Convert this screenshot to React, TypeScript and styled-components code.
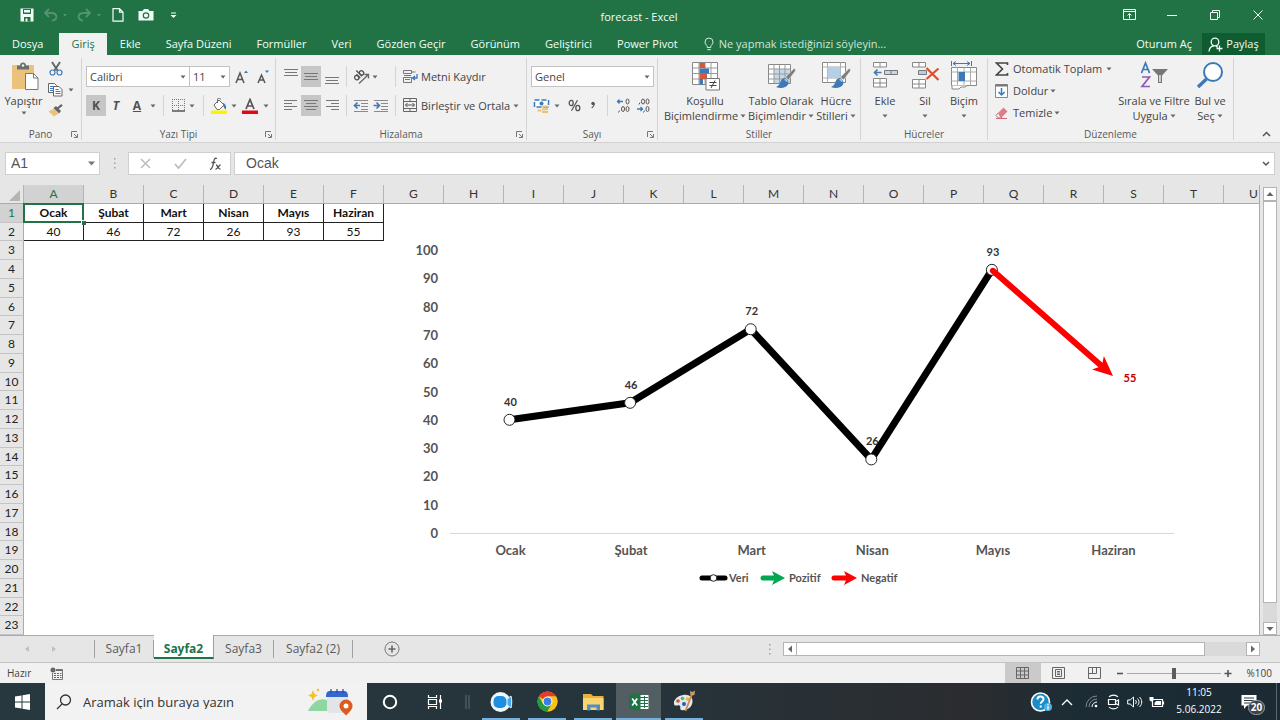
import React from "react";
import styled, { createGlobalStyle, css } from "styled-components";

const UI = `"Open Sans", "Noto Sans", sans-serif`;
const CELL = `Lato, "Noto Sans", sans-serif`;
const GREEN = "#217346";
const INK = "#444444";

const Global = createGlobalStyle`
  *, *::before, *::after { box-sizing: border-box; }
  body { margin: 0; background: #ffffff; }
  button, input, select {
    margin: 0; padding: 0; border: 0; background: none; color: inherit;
    font: inherit; border-radius: 0; outline: none;
  }
  button { display: flex; align-items: center; justify-content: center; white-space: nowrap; }
  select { appearance: none; }
  svg { display: block; flex: none; }
`;

const Window = styled.div`
  display: flex;
  flex-direction: column;
  min-height: 100vh;
  overflow: hidden;
  background: #e6e6e6;
  color: ${INK};
  font: 11px/14px ${UI};
`;

/* Title bar and ribbon tabs */
const Header = styled.header`
  background: ${GREEN};
  color: #f2fff7;
`;
const TitleBar = styled.div`
  display: grid;
  grid-template-columns: 1fr auto 1fr;
  align-items: center;
  height: 33px;
  padding: 0 14px 4px 12px;
`;
const QuickAccess = styled.div`
  display: flex;
  align-items: center;
  gap: 6px;
  padding-left: 7px;
`;
const WindowButtons = styled.div`
  display: flex;
  justify-content: flex-end;
  gap: 27px;
`;
const PlainButton = styled.button<{ $w?: number }>`
  width: ${(p) => p.$w ?? 16}px;
  height: 16px;
`;
const TitleText = styled.h1`
  margin: 0;
  padding-top: 4px;
  font: 11px/14px ${UI};
`;
const TabRow = styled.nav`
  display: flex;
  height: 22px;
`;
const RibbonTab = styled.button<{ $active?: boolean; $first?: boolean }>`
  padding: 0 12px 0 13px;
  ${(p) => p.$first && css`
    padding: 0 16px 0 12px;
  `}
  ${(p) => p.$active && css`
    padding: 0 12px;
    background: #f1f1f1;
    color: ${GREEN};
  `}
`;
const TellMe = styled.button`
  gap: 5px;
  margin-left: 14px;
  color: #cfe5d8;
`;
const Spacer = styled.div`
  flex: 1;
`;
const SignIn = styled.button`
  padding: 0 10px;
`;
const Share = styled.button`
  gap: 3px;
  width: 63px;
  margin-right: 15px;
  background: #0e5c2f;
`;

/* Ribbon */
const Ribbon = styled.section`
  display: flex;
  height: 88px;
  padding-top: 3px;
  background: #f1f1f1;
  border-bottom: 1px solid #d2d2d2;
`;
const GroupBox = styled.div<{ $w: number }>`
  display: flex;
  flex: none;
  flex-direction: column;
  width: ${(p) => p.$w}px;
  height: 82px;
  border-right: 1px solid #d4d4d4;
`;
const GroupBody = styled.div<{ $pad?: string }>`
  display: flex;
  flex: 1;
  min-height: 0;
  padding: ${(p) => p.$pad ?? "0 3px"};
`;
const GroupFoot = styled.div`
  display: grid;
  grid-template-columns: 11px 1fr 11px;
  height: 13px;
  align-items: center;
  color: #5a5a5a;
  font-size: 10px;
  text-align: center;
  & > :nth-child(2) { white-space: nowrap; }
`;
const LaunchButton = styled.button`
  width: 9px;
  height: 9px;
`;
const Rows = styled.div`
  display: flex;
  flex-direction: column;
  gap: 8px;
  padding-top: 8px;
`;
const ToolRow = styled.div`
  display: flex;
  height: 21px;
  align-items: stretch;
`;
const Tool = styled.button<{ $w: number; $on?: boolean }>`
  flex: none;
  width: ${(p) => p.$w}px;
  background: ${(p) => (p.$on ? "#c6c6c6" : "transparent")};
  & > b { color: #505050; font-size: 12px; }
`;
const Divider = styled.span<{ $w: number }>`
  display: flex;
  flex: none;
  justify-content: center;
  width: ${(p) => p.$w}px;
  &::before { content: ""; width: 1px; background: #d4d4d4; }
`;
const Gap = styled.span<{ $w: number }>`
  flex: none;
  width: ${(p) => p.$w}px;
`;
const TextTool = styled.button`
  gap: 3px;
  padding-left: 4px;
`;
const SelectWrap = styled.label<{ $w: number }>`
  position: relative;
  display: flex;
  width: ${(p) => p.$w}px;
  height: 21px;
  border: 1px solid #c3c3c3;
  background: #ffffff;
  & + & { border-left: 0; }
  & > select { flex: 1; min-width: 0; padding-left: 3px; }
  & > svg { position: absolute; right: 3px; top: 8px; pointer-events: none; }
`;
const PasteButton = styled.button`
  flex-direction: column;
  justify-content: flex-start;
  width: 47px;
  gap: 3px;
  padding-top: 4px;
`;
const MiniColumn = styled.div`
  display: flex;
  flex-direction: column;
  & > div { height: 21px; }
`;
const BigButton = styled.button<{ $w: number }>`
  flex: none;
  flex-direction: column;
  justify-content: flex-start;
  width: ${(p) => p.$w}px;
  padding-top: 3px;
  line-height: 15px;
  & > svg:first-child { margin-bottom: 2px; }
`;
const WithCaret = styled.span`
  display: flex;
  align-items: center;
  gap: 2px;
  min-height: 15px;
`;
const EditColumn = styled.div`
  display: flex;
  flex-direction: column;
  width: 127px;
  padding-left: 3px;
  & > button { justify-content: flex-start; height: 22px; gap: 4px; }
`;
const Collapse = styled.div`
  display: flex;
  flex: 1;
  align-items: flex-end;
  justify-content: flex-end;
  padding: 0 6px 0 0;
`;

/* Formula bar */
const FormulaBar = styled.div`
  display: flex;
  height: 42px;
  padding: 9px 5px 10px;
  color: #555555;
  font: 14px/21px "Liberation Sans", sans-serif;
`;
const WhiteBox = styled.div<{ $w?: number }>`
  display: flex;
  align-items: center;
  justify-content: space-between;
  flex: ${(p) => (p.$w ? "none" : "1")};
  width: ${(p) => (p.$w ? p.$w + "px" : "auto")};
  padding: 0 4px 0 5px;
  border: 1px solid #cfcfcf;
  background: #ffffff;
  & > input { flex: 1; min-width: 0; }
`;
const NameInput = styled.input``;
const FormulaInput = styled.input`
  padding-left: 6px;
`;
const DotsBox = styled.span<{ $w: number }>`
  display: flex;
  flex: none;
  align-items: center;
  justify-content: center;
  width: ${(p) => p.$w}px;
`;

/* Sheet */
const SheetArea = styled.main`
  display: flex;
  flex: 1 0 auto;
  height: 451px;
  border-bottom: 1px solid #ababab;
`;
const SheetView = styled.div`
  position: relative;
  flex: 1;
  min-width: 0;
  height: 450px;
  overflow: hidden;
  background: #ffffff;
  border-right: 1px solid #ababab;
`;
const Grid = styled.table`
  width: 1284px;
  table-layout: fixed;
  border-collapse: separate;
  border-spacing: 0;
  font: 12px/16px ${CELL};
  color: #222222;
  text-align: center;
  th, td { padding: 0; }
`;
const ColHead = styled.th<{ $on?: boolean }>`
  height: 19px;
  font-weight: 400;
  background: ${(p) => (p.$on ? "#d2d2d2" : "#e6e6e6")};
  color: ${(p) => (p.$on ? GREEN : "#333333")};
  border-right: 1px solid #b5b5b5;
  border-bottom: 1px solid ${(p) => (p.$on ? GREEN : "#ababab")};
`;
const Corner = styled(ColHead)`
  & > svg { margin: 2px 3px 0 auto; }
`;
const RowHead = styled.th<{ $on?: boolean }>`
  font-weight: 400;
  background: ${(p) => (p.$on ? "#d2d2d2" : "#e6e6e6")};
  color: ${(p) => (p.$on ? GREEN : "#222222")};
  border-right: 1px solid ${(p) => (p.$on ? GREEN : "#ababab")};
  border-bottom: 1px solid #c4c4c4;
`;
const Row = styled.tr<{ $short: boolean }>`
  height: ${(p) => (p.$short ? 18 : 19)}px;
`;
const Cell = styled.td<{ $bold?: boolean; $selected?: boolean }>`
  position: relative;
  color: #111111;
  font-weight: ${(p) => (p.$bold ? 700 : 400)};
  border-right: 1px solid #222222;
  border-bottom: 1px solid #222222;
  ${(p) => p.$selected && css`
    &::before {
      content: "";
      position: absolute;
      inset: -1px;
      border: 2px solid ${GREEN};
    }
    &::after {
      content: "";
      position: absolute;
      right: -3px;
      bottom: -3px;
      z-index: 1;
      width: 5px;
      height: 5px;
      background: ${GREEN};
      border: 1px solid #ffffff;
      border-width: 1px 0 0 1px;
    }
  `}
`;
const ChartFrame = styled.figure`
  position: absolute;
  left: 400px;
  top: 45px;
  margin: 0;
`;
const VScroll = styled.div`
  display: flex;
  flex-direction: column;
  width: 20px;
  padding: 2px 3px 0;
`;
const ScrollButton = styled.button<{ $h: number }>`
  flex: none;
  width: 14px;
  height: ${(p) => p.$h}px;
  border: 1px solid #b4b4b4;
  background: #ffffff;
`;
const VThumb = styled.div`
  flex: 1;
  background: #ffffff;
  border: 1px solid #b4b4b4;
`;
const VTrack = styled.div`
  height: 19px;
  background: #dadada;
`;

/* Sheet tabs */
const SheetTabs = styled.div`
  display: flex;
  height: 27px;
  padding-right: 20px;
  border-bottom: 1px solid #c3c3c3;
  font: 12px/16px ${UI};
`;
const SheetNav = styled.div`
  display: flex;
  align-items: center;
  gap: 21px;
  width: 95px;
  height: 18px;
  margin-top: 4px;
  padding-left: 24px;
  border-right: 1px solid #a0a0a0;
`;
const SheetTab = styled.button<{ $w: number; $active?: boolean; $bar?: boolean }>`
  width: ${(p) => p.$w}px;
  height: 18px;
  margin-top: 4px;
  color: #5a5a5a;
  border-right: ${(p) => (p.$bar ? "1px solid #a0a0a0" : "0")};
  ${(p) => p.$active && css`
    height: 24px;
    margin-top: -1px;
    padding-top: 5px;
    background: #ffffff;
    color: ${GREEN};
    font-weight: 700;
    border-right: 1px solid #a0a0a0;
    border-bottom: 2px solid ${GREEN};
  `}
`;
const AddSheet = styled.button`
  width: 77px;
`;
const HScroll = styled.div`
  display: flex;
  align-self: center;
  width: 477px;
  height: 14px;
  background: #dadada;
`;
const HThumb = styled.div`
  width: 408px;
  background: #ffffff;
  border: 1px solid #b4b4b4;
  border-left: 0;
`;

/* Status bar */
const StatusBar = styled.footer`
  display: flex;
  align-items: center;
  height: 20px;
  padding: 0 8px 0 7px;
  background: #f1f1f1;
  font-size: 10px;
`;
const ViewButton = styled.button<{ $on?: boolean }>`
  width: 36px;
  height: 20px;
  background: ${(p) => (p.$on ? "#cacaca" : "transparent")};
`;
const ZoomRange = styled.input`
  appearance: none;
  width: 94px;
  height: 12px;
  margin: 0 3px;
  background: linear-gradient(#a8a8a8, #a8a8a8) center / 100% 1px no-repeat;
  &::-webkit-slider-thumb { appearance: none; width: 4px; height: 11px; background: #5c5c5c; }
`;
const StatusIcon = styled.span`
  margin-left: 19px;
`;
const ZoomValue = styled.span`
  margin-left: 15px;
`;

/* Taskbar */
const Taskbar = styled.div`
  display: flex;
  align-items: stretch;
  height: 37px;
  background: linear-gradient(90deg, #27383f, #26343b 50%, #2b2c2f 76%, #1c2c35 84%, #1b2a33);
  color: #ffffff;
`;
const StartButton = styled.button`
  width: 45px;
`;
const SearchBox = styled.label`
  display: flex;
  align-items: center;
  width: 322px;
  padding: 0 14px 0 11px;
  background: #f2f2f2;
  color: #333333;
  font-size: 13px;
  & > input { flex: 1; min-width: 0; margin-left: 11px; }
  & > input::placeholder { color: #333333; opacity: 1; }
`;
const TaskButton = styled.button<{ $open?: boolean; $active?: boolean; $w?: number }>`
  position: relative;
  width: ${(p) => p.$w ?? 46}px;
  background: ${(p) => (p.$active ? "#525e62" : "transparent")};
  ${(p) => p.$open && css`
    &::after {
      content: "";
      position: absolute;
      left: ${p.$active ? 0 : 4}px;
      right: ${p.$active ? 0 : 4}px;
      bottom: 0;
      height: 2px;
      background: #76b0de;
    }
  `}
`;
const TraySlot = styled.button`
  width: 22px;
`;
const Clock = styled.time`
  width: 62px;
  padding-top: 1px;
  font: 10px/17px ${UI};
  text-align: center;
`;
const Notices = styled.button`
  position: relative;
  width: 42px;
  margin-right: 4px;
  padding-right: 5px;
`;
const NoticeBadge = styled.span`
  position: absolute;
  left: 18px;
  top: 17px;
  width: 17px;
  height: 15px;
  border: 1px solid #9aa2a6;
  border-radius: 8px;
  background: #3a444a;
  font: 700 10px/13px ${UI};
`;
const DesktopEdge = styled.span`
  width: 4px;
  border-left: 1px solid #5b666b;
`;

/* Icons */
type IconProps = { w: number; h: number; children: React.ReactNode };
const Icon = ({ w, h, children }: IconProps) => (
  <svg width={w} height={h} viewBox={`0 0 ${w} ${h}`} fill="none" aria-hidden="true">
    {children}
  </svg>
);
const Caret = () => (
  <Icon w={6} h={4}><path d="M0.5 0.5h5L3 3.5z" fill="#666666" /></Icon>
);
const Arrow = ({ d }: { d: string }) => (
  <Icon w={8} h={8}><path d={d} fill="#666666" /></Icon>
);
const Dots = () => (
  <Icon w={3} h={13}>
    <path d="M1 1h1.5v1.5H1zM1 5.5h1.5V7H1zM1 10h1.5v1.5H1z" fill="#a0a0a0" />
  </Icon>
);
const Lines = ({ spec }: { spec: [number, number, number][] }) => (
  <Icon w={14} h={16}>
    {spec.map(([x, y, len]) => (
      <path key={y} d={`M${x} ${y + 0.5}h${len}`} stroke="#777777" />
    ))}
  </Icon>
);
const Launcher = () => (
  <Icon w={9} h={9}>
    <path d="M1.500 7V1.500H7M4 4l3 3M7.500 4v3.500H4" stroke="#777777" />
  </Icon>
);
const Indent = ({ right }: { right?: boolean }) => (
  <Icon w={16} h={14}>
    <path d="M1 1.500h14M8 4.500h7M8 7.500h7M8 10.500h7M1 12.500h14" stroke="#8a8a8a" />
    <path
      d={right ? "M0.500 6.500h5M3.500 3.500l3 3-3 3" : "M7 6.500H2M4.500 3.500l-3 3 3 3"}
      stroke="#3e78b5"
      strokeWidth="1.600"
    />
  </Icon>
);
const Brush = ({ x }: { x: number }) => (
  <g transform={`translate(${x} 0)`}>
    <path d="M20 7.500 11.500 16l3 3 6.500-8.500c.7-1 .6-3.500-1-3z" fill="#7c7c7c" stroke="#f1f1f1" strokeWidth="0.600" />
    <path d="M11 17c-3 0-4 2.500-5 5-.8 1.900-2 3.300-4 4 4.500 1.800 10.500.8 12-2.500.8-1.700.3-3.500-.4-4.500z" fill="#3e78b5" />
    <path d="M10.500 18.500c1.300 0 2.300 1 2.400 2.300" stroke="#a9cdea" strokeWidth="1.400" />
  </g>
);

const PasteIcon = () => (
  <Icon w={30} h={29}>
    <g transform="translate(3 0)">
      <rect x="0" y="3" width="22" height="24" rx="1" fill="#ebc27c" />
      <path d="M5 3.500h3C8 1.500 9.300.500 11 .500s3 1 3 3h3V7.500H5z" fill="#6e6e6e" />
      <circle cx="11" cy="3.500" r="1.200" fill="#f1f1f1" />
      <path d="M13.500 11.500h8l4.500 4.500v11.500H13.500z" fill="#ffffff" stroke="#777777" />
      <path d="M21.500 11.500V16H26" stroke="#777777" />
    </g>
  </Icon>
);
const CutIcon = () => (
  <Icon w={14} h={15}>
    <path d="M3 1l5.500 8.500M11 1L5.500 9.500" stroke="#666666" strokeWidth="2" />
    <circle cx="3.500" cy="11.500" r="2.500" stroke="#3e78b5" strokeWidth="1.200" />
    <circle cx="10.500" cy="11.500" r="2.500" stroke="#3e78b5" strokeWidth="1.200" />
  </Icon>
);
const CopyIcon = () => (
  <Icon w={15} h={14}>
    <path d="M1 .5h5.500L8.500 2.500V9.500H.5V.5z" fill="#fff" stroke="#666" />
    <path d="M2 3.500h4M2 5.500h4M2 7.500h3" stroke="#3e78b5" />
    <path d="M5.500 3.500H11l3 3v6.500H5.500z" fill="#fff" stroke="#666" />
    <path d="M7.500 6.500h3M7.500 8.500h5M7.500 10.500h5" stroke="#3e78b5" />
  </Icon>
);
const PainterIcon = () => (
  <Icon w={15} h={13}>
    <path d="M0.500 7.500 6 4.500l4.500 5L6 12.500z" fill="#ebc27c" />
    <path d="M5.500 4l2.500-2 5 5-2 2.500z" fill="#666" />
    <path d="M9.500 4.500 14 .8" stroke="#666" strokeWidth="2.200" />
  </Icon>
);

const CondIcon = () => (
  <Icon w={30} h={30}>
    <path d="M2.500 1.500h25v22h-25z" fill="#fff" stroke="#888" />
    <path d="M2.500 7h25M2.500 12.500h25M2.500 18h25M9 1.500v22M15 1.500v22M21 1.500v22" stroke="#999" />
    <path d="M9.500 2H15v5H9.500zM9.500 12.500H17V18H9.500z" fill="#d05a3c" />
    <path d="M9.500 7.500H19v5H9.500zM9.500 18H13v5.500H9.500z" fill="#3e78b5" />
    <path d="M16 17.500h13.500v11.500H16z" fill="#fff" stroke="#777" />
    <path d="M19.500 21.500h7M19.500 24.500h7M25 19.500l-4 7.500" stroke="#444" />
  </Icon>
);
const TableIcon = () => (
  <Icon w={30} h={30}>
    <path d="M2.500 3.500h22v19h-22z" fill="#fff" stroke="#888" />
    <path d="M8 8h16v14H8z" fill="#c3d9ea" />
    <path d="M2.500 8h22M2.500 13h22M2.500 18h22M8 3.500v19M13.500 3.500v19M19 3.500v19" stroke="#999" />
    <Brush x={8} />
  </Icon>
);
const StyleIcon = () => (
  <Icon w={30} h={30}>
    <path d="M1.500 1.500h23v20h-23z" fill="#fff" stroke="#888" />
    <path d="M1.500 6h23M1.500 17h23M6.500 1.500v20M19.500 1.500v20" stroke="#aaa" />
    <path d="M6.500 6h13v11h-13z" fill="#b5cfe6" />
    <Brush x={8} />
  </Icon>
);
const InsertIcon = () => (
  <Icon w={28} h={30}>
    <path d="M2.500 1.500h13v4.500h-13zM9 1.500v4.500M2.500 17.500h13v8.500h-13zM9 17.500v8.500M2.500 22h13" fill="#fff" stroke="#888" />
    <path d="M13.500 9.500h13v4h-13zM20 9.500v4" fill="#c3d9ea" stroke="#777" />
    <path d="M3.500 11.500h7M6.500 8.500l-3 3 3 3" stroke="#3e78b5" strokeWidth="1.600" />
  </Icon>
);
const DeleteIcon = () => (
  <Icon w={30} h={30}>
    <path d="M2.500 1.500h13v4.500h-13zM9 1.500v4.500M2.500 18.500h13v8.500h-13zM9 18.500v8.500M2.500 23h13" fill="#fff" stroke="#888" />
    <path d="M8.500 9.500h8v4h-8z" fill="#b5cfe6" stroke="#777" />
    <path d="M16.500 7l12 12M28.500 7.500L16.500 18" stroke="#d9512c" strokeWidth="2.200" />
  </Icon>
);
const FormatIcon = () => (
  <Icon w={28} h={30}>
    <path d="M1.500 0v5M21.500 0v5M3 2.500h17M6 .5l-3 2 3 2M17 .5l3 2-3 2" stroke="#3e78b5" />
    <path d="M1.500 6.500h25v18h-25z" fill="#fff" stroke="#888" />
    <path d="M1.500 11h25M1.500 20h25M7.500 6.500v18M14 6.500v18M20.500 6.500v18" stroke="#aaa" />
    <path d="M8.500 11h6.500v9H8.500z" fill="#3e78b5" />
    <path d="M2 24.500v3.500h7l2-2h4l2-1.500" fill="#fff" stroke="#888" />
  </Icon>
);

const ChromeIcon = () => (
  <Icon w={21} h={21}>
    <circle cx="10.500" cy="10.500" r="10" fill="#fbc116" />
    <path d="M10.500 10.500 1.840 5.500A10 10 0 0 1 19.160 5.500H10.500z" fill="#e33b2e" />
    <path d="M10.500 10.500 6.200 13 1.840 5.500A10 10 0 0 0 10.500 20.500L14.800 13z" fill="#249a41" />
    <path d="M10.500 5.500h8.660A10 10 0 0 1 10.500 20.500L14.800 13z" fill="#fbc116" />
    <circle cx="10.500" cy="10.500" r="5" fill="#fff" />
    <circle cx="10.500" cy="10.500" r="3.900" fill="#3b7de9" />
  </Icon>
);

/* Chart */
const months = ["Ocak", "Şubat", "Mart", "Nisan", "Mayıs", "Haziran"];
const values = [40, 46, 72, 26, 93, 55];
const ticks = [100, 90, 80, 70, 60, 50, 40, 30, 20, 10, 0];
const px = (i: number) => 109.5 + i * 120.6;
const py = (v: number) => 303 - v * 2.83;

const Chart = () => {
  const line = values.slice(0, 5).map((v, i) => `${px(i)},${py(v)}`).join(" ");
  const [x1, y1, x2, y2] = [px(4) + 1, py(93) + 1, 713, 146];
  const angle = (Math.atan2(y2 - y1, x2 - x1) * 180) / Math.PI;
  const length = Math.hypot(x2 - x1, y2 - y1);
  return (
    <svg width="800" height="380" viewBox="0 0 800 380" fontFamily={CELL} fontWeight="700" role="img" aria-label="Aylık veri">
      <g fontSize="13" fill="#555555" textAnchor="end">
        {ticks.map((t) => <text key={t} x="38" y={py(t) + 5}>{t}</text>)}
      </g>
      <path d="M50 303.500h724" stroke="#d9d9d9" />
      <g fontSize="13" fill="#555555" textAnchor="middle">
        {months.map((m, i) => <text key={m} x={px(i) + 1} y="325">{m}</text>)}
      </g>
      <polyline points={line} fill="none" stroke="#000000" strokeWidth="7" strokeLinejoin="round" />
      {values.slice(0, 5).map((v, i) => (
        <g key={i}>
          <circle cx={px(i)} cy={py(v)} r="5.500" fill="#ffffff" stroke="#222222" />
          <text x={px(i) + 1} y={py(v) - 14} fontSize="11" fill="#333333" textAnchor="middle">{v}</text>
        </g>
      ))}
      <g transform={`translate(${x1} ${y1}) rotate(${angle})`}>
        <path d={`M0 0H${length - 14}`} stroke="#ff0000" strokeWidth="6" strokeLinecap="round" />
        <path d={`M${length} 0l-20 -9 5 9 -5 9z`} fill="#ff0000" />
      </g>
      <text x="730" y="152" fontSize="11" fill="#c00000" textAnchor="middle">55</text>
      <g fontSize="11" fill="#555555">
        <path d="M302 348h23" stroke="#000" strokeWidth="5" strokeLinecap="round" />
        <circle cx="313.500" cy="348" r="3.300" fill="#fff" stroke="#222" />
        <text x="329" y="352">Veri</text>
        <path d="M363 348h12" stroke="#00a651" strokeWidth="5" strokeLinecap="round" />
        <path d="M385 348l-13 -7 3 7 -3 7z" fill="#00a651" />
        <text x="389" y="352">Pozitif</text>
        <path d="M434 348h12" stroke="#ff0000" strokeWidth="5" strokeLinecap="round" />
        <path d="M457 348l-13 -7 3 7 -3 7z" fill="#ff0000" />
        <text x="461" y="352">Negatif</text>
      </g>
    </svg>
  );
};

const Group = ({ w, name, launch, pad, children }: {
  w: number; name: string; launch?: boolean; pad?: string; children: React.ReactNode;
}) => (
  <GroupBox $w={w}>
    <GroupBody $pad={pad}>{children}</GroupBody>
    <GroupFoot>
      <span />
      <span>{name}</span>
      {launch ? <LaunchButton aria-label={`${name} ayarları`}><Launcher /></LaunchButton> : <span />}
    </GroupFoot>
  </GroupBox>
);

const columns = "ABCDEFGHIJKLMNOPQRSTU".split("");
const otherTabs = ["Ekle", "Sayfa Düzeni", "Formüller", "Veri", "Gözden Geçir", "Görünüm", "Geliştirici", "Power Pivot"];

export default function App() {
  return (
    <Window>
      <Global />
      <Header>
        <TitleBar>
          <QuickAccess>
            <PlainButton aria-label="Kaydet">
              <Icon w={14} h={14}>
                <path d="M.5.500h13v13H.5z" fill="#f2fff7" />
                <path d="M3 1h8v5H3zM4 9h6.500v4.500H4z" fill={GREEN} />
                <path d="M5.500 10.500h2v3h-2zM4 2h6v2.500H4z" fill="#f2fff7" />
              </Icon>
            </PlainButton>
            <PlainButton $w={28} aria-label="Geri al">
              <Icon w={25} h={14}>
                <path d="M6 1L2 5l4 4M2 5h6c7 0 7 7 1 7.500" stroke="#559473" strokeWidth="1.800" />
                <path d="M20 6h4l-2 2.500z" fill="#559473" />
              </Icon>
            </PlainButton>
            <PlainButton $w={28} aria-label="Yinele">
              <Icon w={25} h={14}>
                <path d="M9 1l4 4-4 4M13 5H7c-7 0-7 7-1 7.500" stroke="#559473" strokeWidth="1.800" />
                <path d="M20 6h4l-2 2.500z" fill="#559473" />
              </Icon>
            </PlainButton>
            <PlainButton $w={18} aria-label="Yeni">
              <Icon w={12} h={14}>
                <path d="M1 .700h6.500L11 4.200v9H1zM7.500.700v3.500H11" stroke="#f2fff7" strokeWidth="1.200" />
              </Icon>
            </PlainButton>
            <PlainButton $w={26} aria-label="Kamera">
              <Icon w={16} h={13}>
                <path d="M.5 3h4L6 1h4l1.500 2h4v9.500H.5z" fill="#f2fff7" />
                <circle cx="8" cy="7.500" r="2.700" stroke={GREEN} strokeWidth="1.200" />
              </Icon>
            </PlainButton>
            <PlainButton aria-label="Hızlı erişim">
              <Icon w={7} h={8}><path d="M1 2h5" stroke="#f2fff7" /><path d="M.5 4h6L3.500 7z" fill="#f2fff7" /></Icon>
            </PlainButton>
          </QuickAccess>
          <TitleText>forecast - Excel</TitleText>
          <WindowButtons>
            <PlainButton aria-label="Şerit seçenekleri">
              <Icon w={13} h={11}><path d="M.5.500h12v10H.5zM.5 2.500h12M6.500 9.500V5M4.500 6.500l2-2 2 2" stroke="#f2fff7" /></Icon>
            </PlainButton>
            <PlainButton aria-label="Simge durumuna küçült">
              <Icon w={10} h={10}><path d="M0 5.500h10" stroke="#f2fff7" /></Icon>
            </PlainButton>
            <PlainButton aria-label="Önceki boyut">
              <Icon w={10} h={10}><path d="M.5 2.500h7v7h-7zM2.500 2.500v-2h7v7h-2" stroke="#f2fff7" /></Icon>
            </PlainButton>
            <PlainButton aria-label="Kapat">
              <Icon w={10} h={10}><path d="M.5.500l9 9M9.500.500l-9 9" stroke="#f2fff7" /></Icon>
            </PlainButton>
          </WindowButtons>
        </TitleBar>
        <TabRow>
          <RibbonTab $first>Dosya</RibbonTab>
          <RibbonTab $active>Giriş</RibbonTab>
          {otherTabs.map((t) => <RibbonTab key={t}>{t}</RibbonTab>)}
          <TellMe>
            <Icon w={10} h={14}>
              <path d="M3.200 10.500V8.800C1.800 7.800 1 6.600 1 5a4 4 0 0 1 8 0c0 1.600-.8 2.800-2.200 3.800v1.700zM3.200 12.700h3.600" stroke="#cfe5d8" />
            </Icon>
            Ne yapmak istediğinizi söyleyin...
          </TellMe>
          <Spacer />
          <SignIn>Oturum Aç</SignIn>
          <Share>
            <Icon w={15} h={15}>
              <circle cx="7" cy="5" r="3.800" stroke="#f2fff7" strokeWidth="1.300" />
              <path d="M1 14.500c.3-3.500 2.500-5.500 5-5.700M8 8.500l1.500 2M11.500 8.500v6M8.500 11.500h6" stroke="#f2fff7" strokeWidth="1.300" />
            </Icon>
            Paylaş
          </Share>
        </TabRow>
      </Header>

      <Ribbon>
        <Group w={82} name="Pano" launch pad="0">
          <PasteButton>
            <PasteIcon />
            Yapıştır
            <Caret />
          </PasteButton>
          <MiniColumn>
            <ToolRow><Tool $w={17} aria-label="Kes"><CutIcon /></Tool></ToolRow>
            <ToolRow>
              <Tool $w={17} aria-label="Kopyala"><CopyIcon /></Tool>
              <Tool $w={13} aria-label="Kopyalama seçenekleri"><Caret /></Tool>
            </ToolRow>
            <ToolRow><Tool $w={17} aria-label="Biçim boyacısı"><PainterIcon /></Tool></ToolRow>
          </MiniColumn>
        </Group>

        <Group w={194} name="Yazı Tipi" launch pad="0 0 0 4px">
          <Rows>
            <ToolRow>
              <SelectWrap $w={104}>
                <select aria-label="Yazı tipi"><option>Calibri</option></select>
                <Caret />
              </SelectWrap>
              <SelectWrap $w={40}>
                <select aria-label="Boyut"><option>11</option></select>
                <Caret />
              </SelectWrap>
              <Tool $w={23} aria-label="Büyüt">
                <Icon w={14} h={16}>
                  <path d="M1 14L5 4l4 10M2.500 10.500h5" stroke="#555" strokeWidth="1.500" />
                  <path d="M9 4l2-2.500L13 4z" fill="#3e78b5" />
                </Icon>
              </Tool>
              <Tool $w={20} aria-label="Küçült">
                <Icon w={14} h={16}>
                  <path d="M2 14l3.500-8L9 14M3.500 11h4" stroke="#555" strokeWidth="1.500" />
                  <path d="M9 1.500h4L11 4z" fill="#3e78b5" />
                </Icon>
              </Tool>
            </ToolRow>
            <ToolRow>
              <Tool $w={20} $on aria-label="Kalın"><b>K</b></Tool>
              <Tool $w={20} aria-label="İtalik"><b><i>T</i></b></Tool>
              <Tool $w={22} aria-label="Altı çizili"><b><u>A</u></b></Tool>
              <Tool $w={10} aria-label="Alt çizgi seçenekleri"><Caret /></Tool>
              <Divider $w={11} />
              <Tool $w={18} aria-label="Kenarlıklar">
                <Icon w={13} h={13}>
                  <path d="M.5 0v12M6.500 0v12M12.500 0v12M0 .5h13M0 6.500h13" stroke="#777" strokeDasharray="1 1" />
                  <path d="M0 12h13" stroke="#555" strokeWidth="1.500" />
                </Icon>
              </Tool>
              <Tool $w={10} aria-label="Kenarlık seçenekleri"><Caret /></Tool>
              <Divider $w={12} />
              <Tool $w={20} aria-label="Dolgu rengi">
                <Icon w={16} h={16}>
                  <path d="M3 7l5-5 5 5-4.500 4.500H6z" fill="#fff" stroke="#666" />
                  <path d="M6.500 5V1.500a1.500 1.500 0 0 1 3 0" stroke="#666" />
                  <path d="M12 5c2 .5 3.500 2.500 3 6.500-2-.5-2-3-3-4z" fill="#3e78b5" />
                  <path d="M0 12.500h16V16H0z" fill="#fdf300" />
                </Icon>
              </Tool>
              <Tool $w={10} aria-label="Dolgu seçenekleri"><Caret /></Tool>
              <Tool $w={22} aria-label="Yazı tipi rengi">
                <Icon w={16} h={16}>
                  <path d="M4 11L8 1.500l4 9.500M5.500 8h5" stroke="#555" strokeWidth="1.700" />
                  <path d="M0 12.500h16V16H0z" fill="#e30613" />
                </Icon>
              </Tool>
              <Tool $w={10} aria-label="Renk seçenekleri"><Caret /></Tool>
            </ToolRow>
          </Rows>
        </Group>

        <Group w={251} name="Hizalama" launch pad="0 0 0 4px">
          <Rows>
            <ToolRow>
              <Tool $w={21} aria-label="Üste hizala"><Lines spec={[[0, 0, 14], [1, 3, 12], [0, 6, 14]]} /></Tool>
              <Tool $w={20} $on aria-label="Ortaya hizala"><Lines spec={[[0, 4, 14], [1, 7, 12], [0, 10, 14]]} /></Tool>
              <Tool $w={21} aria-label="Alta hizala"><Lines spec={[[0, 8, 14], [1, 11, 12], [0, 14, 14]]} /></Tool>
              <Divider $w={9} />
              <Tool $w={20} aria-label="Yönlendirme">
                <Icon w={17} h={16}>
                  <path d="M6 14.500L15 6M11.500 5.500h4v4" stroke="#666" strokeWidth="1.300" />
                  <g transform="rotate(-45 8 8)" stroke="#505050" strokeWidth="1.300">
                    <ellipse cx="4.500" cy="5.500" rx="2" ry="2.300" />
                    <path d="M6.800 2.800v5.400M9.300 0v8.200" />
                    <ellipse cx="11.300" cy="5.500" rx="2" ry="2.300" />
                  </g>
                </Icon>
              </Tool>
              <Tool $w={8} aria-label="Yön seçenekleri"><Caret /></Tool>
              <Gap $w={12} />
              <Divider $w={8} />
              <TextTool>
                <Icon w={15} h={15}>
                  <path d="M.5 1.500h8v3h-8zM8.500 3h4M1 6.500h7M.5 8.500h8v5h-8zM2 10.500h5" stroke="#777" />
                  <path d="M14 5v4H10M12 7l-2.500 2L12 11" stroke="#3e78b5" strokeWidth="1.300" />
                </Icon>
                Metni Kaydır
              </TextTool>
            </ToolRow>
            <ToolRow>
              <Tool $w={21} aria-label="Sola hizala"><Lines spec={[[0, 2, 13], [0, 5, 8], [0, 8, 13], [0, 11, 8]]} /></Tool>
              <Tool $w={20} $on aria-label="Ortala"><Lines spec={[[0, 2, 14], [2, 5, 10], [0, 8, 14], [2, 11, 10]]} /></Tool>
              <Tool $w={21} aria-label="Sağa hizala"><Lines spec={[[1, 2, 13], [6, 5, 8], [1, 8, 13], [6, 11, 8]]} /></Tool>
              <Divider $w={9} />
              <Tool $w={20} aria-label="Girintiyi azalt"><Indent /></Tool>
              <Tool $w={20} aria-label="Girintiyi artır"><Indent right /></Tool>
              <Divider $w={8} />
              <TextTool>
                <Icon w={15} h={15}>
                  <path d="M.5.500h13v13H.5zM.5 3.500h13M.5 10.500h13M7 .5v3M7 10.500v3" stroke="#666" />
                  <path d="M2.500 7h9M4.500 5l-2 2 2 2M9.500 5l2 2-2 2" stroke="#555" />
                </Icon>
                Birleştir ve Ortala
              </TextTool>
              <Tool $w={12} aria-label="Birleştirme seçenekleri"><Caret /></Tool>
            </ToolRow>
          </Rows>
        </Group>

        <Group w={131} name="Sayı" launch pad="0 0 0 4px">
          <Rows>
            <ToolRow>
              <SelectWrap $w={123}>
                <select aria-label="Sayı biçimi"><option>Genel</option></select>
                <Caret />
              </SelectWrap>
            </ToolRow>
            <ToolRow>
              <Tool $w={20} aria-label="Para birimi">
                <Icon w={17} h={16}>
                  <path d="M1.500 2h14v7h-14z" fill="#fff" stroke="#3e78b5" strokeWidth="1.500" strokeDasharray="5 2" />
                  <circle cx="8.500" cy="5.500" r="2" fill="#3e78b5" />
                  <path d="M9 7.500h6v2H9zM9 10.200h6v2H9zM9 13h6v2H9zM4.500 11.500h4v2h-4z" fill="#ebc27c" />
                </Icon>
              </Tool>
              <Tool $w={12} aria-label="Para seçenekleri"><Caret /></Tool>
              <Tool $w={22} aria-label="Yüzde">
                <Icon w={13} h={13}>
                  <ellipse cx="3.200" cy="4" rx="2" ry="2.700" stroke="#555" strokeWidth="1.300" />
                  <ellipse cx="9.800" cy="9" rx="2" ry="2.700" stroke="#555" strokeWidth="1.300" />
                  <path d="M9.500 1.300L3.500 11.700" stroke="#555" strokeWidth="1.200" />
                </Icon>
              </Tool>
              <Tool $w={16} aria-label="Virgül">
                <Icon w={6} h={9}><circle cx="3" cy="2.500" r="1.700" fill="#555" /><path d="M4.300 2.500c0 2-.6 3.300-2.600 4.500" stroke="#555" strokeWidth="1.200" /></Icon>
              </Tool>
              <Divider $w={13} />
              <Tool $w={18} aria-label="Ondalık artır">
                <Icon w={15} h={15}>
                  <path d="M1 3.500h6M3.500 1.500l-2 2 2 2" stroke="#3e78b5" strokeWidth="1.300" />
                  <ellipse cx="11.500" cy="3.500" rx="1.500" ry="2.500" stroke="#555" />
                  <ellipse cx="7" cy="11" rx="1.500" ry="2.500" stroke="#555" />
                  <ellipse cx="11.500" cy="11" rx="1.500" ry="2.500" stroke="#555" />
                  <path d="M3.500 12.500l-1 2" stroke="#555" />
                </Icon>
              </Tool>
              <Tool $w={22} aria-label="Ondalık azalt">
                <Icon w={15} h={15}>
                  <path d="M1 11h6M4.500 9l2 2-2 2" stroke="#3e78b5" strokeWidth="1.300" />
                  <ellipse cx="7" cy="3.500" rx="1.500" ry="2.500" stroke="#555" />
                  <ellipse cx="11.500" cy="3.500" rx="1.500" ry="2.500" stroke="#555" />
                  <ellipse cx="11.500" cy="11" rx="1.500" ry="2.500" stroke="#555" />
                  <path d="M4 4.500l-1 2M8.500 12.500l-1 2" stroke="#555" />
                </Icon>
              </Tool>
            </ToolRow>
          </Rows>
        </Group>

        <Group w={203} name="Stiller" pad="0 0 0 5px">
          <BigButton $w={84}>
            <CondIcon />
            Koşullu
            <WithCaret>Biçimlendirme <Caret /></WithCaret>
          </BigButton>
          <BigButton $w={68}>
            <TableIcon />
            Tablo Olarak
            <WithCaret>Biçimlendir <Caret /></WithCaret>
          </BigButton>
          <BigButton $w={42}>
            <StyleIcon />
            Hücre
            <WithCaret>Stilleri <Caret /></WithCaret>
          </BigButton>
        </Group>

        <Group w={127} name="Hücreler" pad="0 0 0 4px">
          <BigButton $w={40}><InsertIcon />Ekle<WithCaret><Caret /></WithCaret></BigButton>
          <BigButton $w={40}><DeleteIcon />Sil<WithCaret><Caret /></WithCaret></BigButton>
          <BigButton $w={38}><FormatIcon />Biçim<WithCaret><Caret /></WithCaret></BigButton>
        </Group>

        <Group w={246} name="Düzenleme" pad="0 0 0 4px">
          <EditColumn>
            <button>
              <Icon w={14} h={14}><path d="M12.500 3V1H1.500l6 6-6 6h11v-2" stroke="#444" strokeWidth="1.600" /></Icon>
              <WithCaret>Otomatik Toplam</WithCaret>
              <Caret />
            </button>
            <button>
              <Icon w={14} h={14}>
                <path d="M.5.500h12v13H.5z" fill="#fff" stroke="#888" />
                <path d="M.5.500h12v2H.5z" fill="#777" />
                <path d="M6.500 4v7M3.500 8l3 3 3-3" stroke="#3e78b5" strokeWidth="1.500" />
              </Icon>
              <WithCaret>Doldur <Caret /></WithCaret>
            </button>
            <button>
              <Icon w={14} h={14}>
                <path d="M3 7l5.500-5.500 4 4L7 11H5z" fill="#dd7d8c" />
                <path d="M3 7L1 9.500l2.500 2.500H6l1-1M1 12.500h11" stroke="#c96878" />
              </Icon>
              <WithCaret>Temizle <Caret /></WithCaret>
            </button>
          </EditColumn>
          <BigButton $w={70}>
            <Icon w={30} h={30}>
              <path d="M2.500 12L6.500 2l4 10M4 8.500h5" stroke="#3e78b5" strokeWidth="1.700" />
              <path d="M3 16h7.500L3 25.500h8" stroke="#8e5bb5" strokeWidth="1.700" />
              <path d="M13 8h16l-6 6.500V22h-4v-7.500z" fill="#777" />
              <path d="M20.200 14h1.500v7h-1.500z" fill="#eee" />
            </Icon>
            Sırala ve Filtre
            <WithCaret>Uygula <Caret /></WithCaret>
          </BigButton>
          <BigButton $w={42}>
            <Icon w={28} h={30}>
              <circle cx="17" cy="11" r="9" fill="#fff" stroke="#3e78b5" strokeWidth="2" />
              <path d="M10.500 18L2 26" stroke="#3e78b5" strokeWidth="3.500" />
            </Icon>
            Bul ve
            <WithCaret>Seç <Caret /></WithCaret>
          </BigButton>
        </Group>
        <Collapse>
          <PlainButton aria-label="Şeridi daralt">
            <Icon w={9} h={6}><path d="M1 5l3.500-3.500L8 5" stroke="#555" strokeWidth="1.500" /></Icon>
          </PlainButton>
        </Collapse>
      </Ribbon>

      <FormulaBar>
        <WhiteBox $w={95}>
          <NameInput aria-label="Ad kutusu" defaultValue="A1" />
          <Icon w={7} h={5}><path d="M0 .5h7L3.500 4.500z" fill="#777" /></Icon>
        </WhiteBox>
        <DotsBox $w={28}><Dots /></DotsBox>
        <WhiteBox $w={103}>
          <Tool $w={22} aria-label="İptal"><Icon w={11} h={11}><path d="M1 1l9 9M10 1l-9 9" stroke="#bdbdbd" strokeWidth="1.500" /></Icon></Tool>
          <Tool $w={22} aria-label="Gir"><Icon w={13} h={11}><path d="M1 6l3.500 4L12 1" stroke="#bdbdbd" strokeWidth="1.800" /></Icon></Tool>
          <Tool $w={22} aria-label="İşlev ekle">
            <Icon w={13} h={14}>
              <path d="M8 1.500C5.500.500 5 2.500 4.500 5.500S3.500 12 1 12.500M2.500 5.500h4M7 8c2 0 2 4.500 4.500 4M11.500 8C9.500 8 9 12.500 6.500 12" stroke="#555" strokeWidth="1.300" />
            </Icon>
          </Tool>
        </WhiteBox>
        <Gap $w={3} />
        <WhiteBox>
          <FormulaInput aria-label="Formül çubuğu" defaultValue="Ocak" />
          <Icon w={8} h={6}><path d="M1 1l3 3 3-3" stroke="#555" strokeWidth="1.500" /></Icon>
        </WhiteBox>
      </FormulaBar>

      <SheetArea>
        <SheetView>
          <Grid>
            <colgroup>
              <col width={24} />
              {columns.map((c) => <col key={c} width={60} />)}
            </colgroup>
            <thead>
              <tr>
                <Corner aria-label="Tümünü seç"><Icon w={11} h={11}><path d="M11 0v11H0z" fill="#b5b5b5" /></Icon></Corner>
                {columns.map((c) => <ColHead key={c} $on={c === "A"}>{c}</ColHead>)}
              </tr>
            </thead>
            <tbody>
              {Array.from({ length: 23 }, (_, r) => (
                <Row key={r} $short={r % 4 === 1}>
                  <RowHead $on={r === 0}>{r + 1}</RowHead>
                  {r === 0 && months.map((m, i) => <Cell key={m} $bold $selected={i === 0}>{m}</Cell>)}
                  {r === 1 && values.map((v) => <Cell key={v}>{v}</Cell>)}
                  <td colSpan={r < 2 ? 15 : 21} />
                </Row>
              ))}
            </tbody>
          </Grid>
          <ChartFrame><Chart /></ChartFrame>
        </SheetView>
        <VScroll>
          <ScrollButton $h={14} aria-label="Yukarı"><Arrow d="M0.500 6L4 2l3.500 4z" /></ScrollButton>
          <VThumb />
          <VTrack />
          <ScrollButton $h={13} aria-label="Aşağı"><Arrow d="M0.500 2L4 6l3.500-4z" /></ScrollButton>
        </VScroll>
      </SheetArea>

      <SheetTabs>
        <SheetNav>
          <Icon w={6} h={8}><path d="M5 1v6L1 4z" fill="#c0c0c0" /></Icon>
          <Icon w={6} h={8}><path d="M1 1v6l4-3z" fill="#c0c0c0" /></Icon>
        </SheetNav>
        <SheetTab $w={59} $bar>Sayfa1</SheetTab>
        <SheetTab $w={60} $active>Sayfa2</SheetTab>
        <SheetTab $w={60} $bar>Sayfa3</SheetTab>
        <SheetTab $w={79} $bar>Sayfa2 (2)</SheetTab>
        <AddSheet aria-label="Yeni sayfa">
          <Icon w={16} h={16}>
            <circle cx="8" cy="8" r="7" stroke="#777" />
            <path d="M8 4.500v7M4.500 8h7" stroke="#666" strokeWidth="1.600" />
          </Icon>
        </AddSheet>
        <Spacer />
        <DotsBox $w={28}><Dots /></DotsBox>
        <HScroll>
          <ScrollButton $h={14} aria-label="Sola"><Arrow d="M6 0.500L2 4l4 3.500z" /></ScrollButton>
          <HThumb />
          <Spacer />
          <ScrollButton $h={14} aria-label="Sağa"><Arrow d="M2 0.500L6 4 2 7.500z" /></ScrollButton>
        </HScroll>
      </SheetTabs>

      <StatusBar>
        Hazır
        <StatusIcon>
          <Icon w={13} h={13}>
            <circle cx="3" cy="3" r="2.500" fill="#666" />
            <path d="M6 2.500h6.500v10h-10V6" stroke="#777" />
            <path d="M6 3.500h6M4 6.500h2M7 6.500h2M10 6.500h1.500M4 8.500h2M7 8.500h2M10 8.500h1.500M4 10.500h2M7 10.500h2M10 10.500h1.500" stroke="#666" />
          </Icon>
        </StatusIcon>
        <Spacer />
        <ViewButton $on aria-label="Normal">
          <Icon w={13} h={12}><path d="M.5.500h12v11H.5zM.5 4h12M.5 8h12M4.500.500v11M8.500.500v11" stroke="#666" /></Icon>
        </ViewButton>
        <ViewButton aria-label="Sayfa düzeni">
          <Icon w={13} h={12}><path d="M.5.500h12v11H.5zM3.500 2.500h6v7h-6zM5 4.500h3M5 6h3M5 7.500h3" stroke="#666" /></Icon>
        </ViewButton>
        <ViewButton aria-label="Sayfa sonu önizleme">
          <Icon w={13} h={12}><path d="M.5.500h12v11H.5zM4.500.500v6M8.500.500v6M.5 6.500h8" stroke="#666" /></Icon>
        </ViewButton>
        <Gap $w={3} />
        <button aria-label="Uzaklaştır"><Icon w={8} h={9}><path d="M1 4.500h6" stroke="#555" strokeWidth="1.600" /></Icon></button>
        <ZoomRange type="range" aria-label="Yakınlaştırma" min={0} max={100} defaultValue={50} />
        <button aria-label="Yakınlaştır"><Icon w={8} h={9}><path d="M.5 4.500h7M4 1v7" stroke="#555" strokeWidth="1.600" /></Icon></button>
        <ZoomValue>%100</ZoomValue>
      </StatusBar>

      <Taskbar>
        <StartButton aria-label="Başlat">
          <Icon w={15} h={16}>
            <path d="M0 2.500l6.500-1v6H0zM7.500 1.300L15 0v7.500H7.500zM0 8.500h6.500v6L0 13.500zM7.500 8.500H15V16l-7.500-1.200z" fill="#fff" />
          </Icon>
        </StartButton>
        <SearchBox>
          <Icon w={16} h={16}><circle cx="9.500" cy="6" r="5" stroke="#333" strokeWidth="1.300" /><path d="M6 10L1 15" stroke="#333" strokeWidth="1.300" /></Icon>
          <input aria-label="Arama" placeholder="Aramak için buraya yazın" />
          <Icon w={46} h={30}>
            <path d="M1 24C5 15 13 10 20 13l4 11z" fill="#8fd6a0" />
            <path d="M6 3l1.500 4L11 8.500 7.500 10 6 14 4.500 10 1 8.500 4.500 7z" fill="#f5c021" />
            <circle cx="11" cy="3" r="1.300" fill="#f5c021" />
            <rect x="20" y="6" width="21" height="20" rx="3" fill="#e2e5e8" />
            <path d="M19 10c0-4 1-6 4-6h14c3 0 4 2 4 6z" fill="#3566cf" />
            <path d="M24 2v4M30 2v4M36 2v4" stroke="#1e4aa8" strokeWidth="1.200" />
            <path d="M39 28.500c-4-4-6.500-6.500-6.500-9.500a6.500 6.500 0 0 1 13 0c0 3-2.500 5.500-6.500 9.500z" fill="#dc5a1e" />
            <circle cx="39" cy="19" r="2.500" fill="#fff" />
          </Icon>
        </SearchBox>
        <TaskButton aria-label="Cortana">
          <Icon w={16} h={16}><circle cx="8" cy="8" r="6.200" stroke="#fff" strokeWidth="2" /></Icon>
        </TaskButton>
        <TaskButton $w={44} aria-label="Görev görünümü">
          <Icon w={16} h={16}>
            <path d="M1.500 1v2.500h8V1M1.500 5.500h8v5h-8zM1.500 15v-2.500h8V15M13.500 1v14" stroke="#fff" strokeWidth="1.200" />
            <path d="M12 5.500h3v3h-3z" fill="#fff" />
          </Icon>
        </TaskButton>
        <DotsBox $w={21}><Icon w={5} h={14}><path d="M1 0v14M4 0v14" stroke="#5e6b70" /></Icon></DotsBox>
        <TaskButton $open aria-label="Görüntülü görüşme">
          <Icon w={24} h={22}>
            <circle cx="11.500" cy="11" r="10" fill="#eef6fb" />
            <path d="M18 8l4-3c1 3 1 9 0 12l-4-3z" fill="#4aa9e8" stroke="#eef6fb" />
            <rect x="4.500" y="5" width="13" height="12" rx="5" fill="#1d8fe0" />
          </Icon>
        </TaskButton>
        <TaskButton $open aria-label="Chrome"><ChromeIcon /></TaskButton>
        <TaskButton $open aria-label="Dosya Gezgini">
          <Icon w={21} h={18}>
            <path d="M0 1h8l2 2h10.500v14H0z" fill="#e9b23c" />
            <path d="M0 5h20.500v12H0z" fill="#fad46e" />
            <path d="M4 17.500v-6h13v6h-3.500v-3h-6v3z" fill="#4a90c8" />
          </Icon>
        </TaskButton>
        <TaskButton $open $active $w={45} aria-label="Excel">
          <Icon w={20} h={18}>
            <path d="M10 2h9.500v14H10z" fill="#fff" />
            <path d="M11 4.500h8M11 7.500h8M11 10.500h8M11 13.500h8M15.500 3v12" stroke={GREEN} />
            <path d="M0 2l11.500-2v18L0 16z" fill={GREEN} />
            <path d="M3.200 5.500l5 7M8.200 5.500l-5 7" stroke="#fff" strokeWidth="1.700" />
          </Icon>
        </TaskButton>
        <TaskButton $open aria-label="Paint">
          <Icon w={24} h={24}>
            <path d="M11 5c6-1 10 2 9.500 7-.5 6-7 9-11 8-2.500-.7 0-3-2-4.500-1.500-1-5 1.500-5.500-1.500C1.300 9.500 6 5.800 11 5z" fill="#dfe9f1" />
            <circle cx="6" cy="11" r="1.800" fill="#d9512c" />
            <circle cx="10.500" cy="8.500" r="1.800" fill="#5cb85c" />
            <circle cx="15.500" cy="9" r="1.800" fill="#f0b62e" />
            <circle cx="12" cy="14" r="2" fill="#2b5f9e" />
            <path d="M20 4L13.500 21" stroke="#cf8c4a" strokeWidth="1.800" />
            <path d="M18.500 5.500L18 1l2.500 1L23 .5l-.5 4.500z" fill="#c99a6a" />
          </Icon>
        </TaskButton>
        <Spacer />
        <TraySlot aria-label="Yardım">
          <Icon w={22} h={22}>
            <circle cx="10.500" cy="11" r="9" fill="#1a8cc9" stroke="#fff" strokeWidth="1.600" />
            <path d="M7.500 8.500c0-4 6-4 6-.3 0 2.300-2.800 2.300-2.800 4.600M10.700 14.500v2" stroke="#fff" strokeWidth="2" />
            <circle cx="18" cy="16" r="4" fill="#4db3e6" />
            <path d="M18 15v3.500M18 13v1" stroke="#fff" strokeWidth="1.300" />
          </Icon>
        </TraySlot>
        <Gap $w={4} />
        <TraySlot aria-label="Gizli simgeler">
          <Icon w={12} h={8}><path d="M1 7l5-5 5 5" stroke="#fff" strokeWidth="1.400" /></Icon>
        </TraySlot>
        <Gap $w={2} />
        <TraySlot aria-label="Ağ">
          <Icon w={13} h={13}>
            <path d="M1 12A11 11 0 0 1 12 1M4 12a8 8 0 0 1 8-8" stroke="#7e898e" />
            <path d="M7 12a5 5 0 0 1 5-5" stroke="#fff" />
            <circle cx="11" cy="11" r="1.300" fill="#fff" />
          </Icon>
        </TraySlot>
        <TraySlot aria-label="Kamera">
          <Icon w={13} h={16}>
            <path d="M1.500 5.500h7v5h-7zM8.500 7.500l3-1.500v5l-3-1.500M2 3c2-2.500 7-2.500 9 0M2 13c2 2.500 7 2.500 9 0" stroke="#fff" strokeWidth="1.200" />
          </Icon>
        </TraySlot>
        <TraySlot aria-label="Ses">
          <Icon w={16} h={14}>
            <path d="M.7 5h2.500L6.500 2v10L3.200 9H.7zM8.500 5c1 1.200 1 2.800 0 4M10.500 3.500c2 2 2 5 0 7M12.500 2c3 3 3 7 0 10" stroke="#fff" />
          </Icon>
        </TraySlot>
        <TraySlot aria-label="Pil">
          <Icon w={16} h={12}>
            <path d="M3.500 3.500h10v7h-10zM14.500 5.500v3" stroke="#fff" strokeWidth="1.200" />
            <path d="M7 5h5v4H5.500V7z" fill="#fff" />
            <path d="M.5 1v2.500C.5 6 4.500 6 4.500 3.500V1z" fill="#fff" />
          </Icon>
        </TraySlot>
        <Clock>11:05<br />5.06.2022</Clock>
        <Notices aria-label="Bildirimler">
          <Icon w={16} h={16}>
            <path d="M.5 1h15v10.500H6L3 15v-3.500H.5z" fill="#fff" />
            <path d="M3 4h10M3 6.500h10M3 9h6" stroke="#26343b" />
          </Icon>
          <NoticeBadge>20</NoticeBadge>
        </Notices>
        <DesktopEdge />
      </Taskbar>
    </Window>
  );
}
